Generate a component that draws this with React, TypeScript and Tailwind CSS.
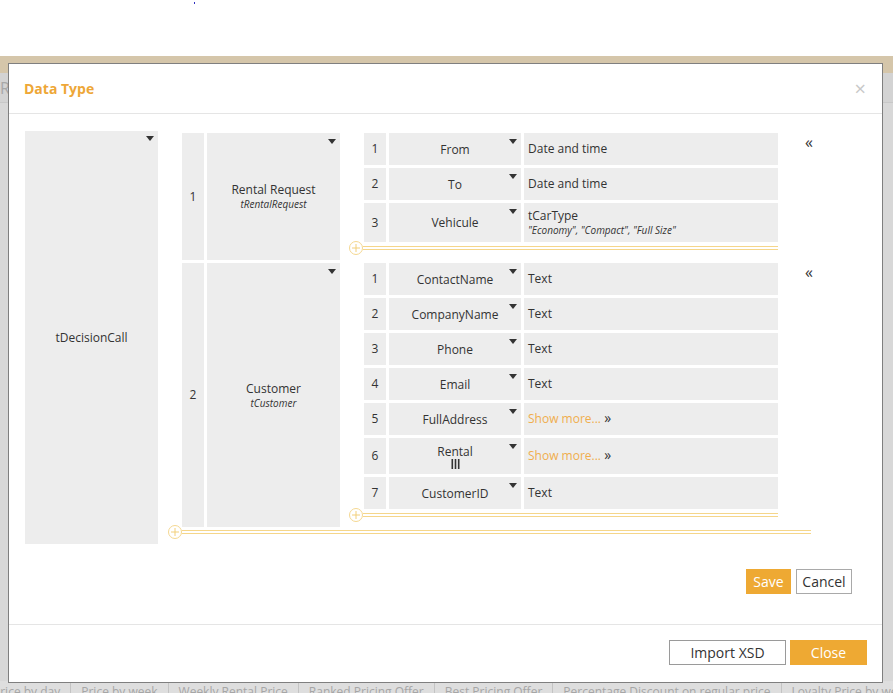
import React from "react";

type Field = {
  name: string;
  type?: string;
  sub?: string;
  more?: boolean;
  list?: boolean;
};

const requestFields: Field[] = [
  { name: "From", type: "Date and time" },
  { name: "To", type: "Date and time" },
  { name: "Vehicule", type: "tCarType", sub: '"Economy", "Compact", "Full Size"' },
];

const customerFields: Field[] = [
  { name: "ContactName", type: "Text" },
  { name: "CompanyName", type: "Text" },
  { name: "Phone", type: "Text" },
  { name: "Email", type: "Text" },
  { name: "FullAddress", more: true },
  { name: "Rental", more: true, list: true },
  { name: "CustomerID", type: "Text" },
];

const tabs = [
  "Price by day",
  "Price by week",
  "Weekly Rental Price",
  "Ranked Pricing Offer",
  "Best Pricing Offer",
  "Percentage Discount on regular price",
  "Loyalty Price by week",
];

const Caret = () => (
  <svg width="8" height="5" viewBox="0 0 8 5" className="absolute right-[4px] top-[6px]">
    <path d="M0 0 L8 0 L4 5 Z" fill="#333" />
  </svg>
);

const ListIcon = () => (
  <svg width="9" height="10" viewBox="0 0 9 10" className="mx-auto block">
    <rect x="0.5" y="0" width="1.6" height="10" fill="#333" />
    <rect x="3.7" y="0" width="1.6" height="10" fill="#333" />
    <rect x="6.9" y="0" width="1.6" height="10" fill="#333" />
  </svg>
);

const AddLine = ({ offset }: { offset: "inner" | "outer" }) => (
  <div
    className={
      offset === "inner"
        ? "flex h-[14px] items-center -mt-[1px] -ml-[15px]"
        : "flex h-[14px] items-center -mt-[2px] -ml-[14px]"
    }
  >
    <div className="flex h-[14px] w-[14px] shrink-0 items-center justify-center rounded-full border border-[#f5d891] bg-white">
      <svg width="8" height="8" viewBox="0 0 8 8">
        <path d="M4 0 V8 M0 4 H8" stroke="#f2cf7a" strokeWidth="1" />
      </svg>
    </div>
    <div className="h-[4px] flex-1 border-y border-[#f5d68a]" />
  </div>
);

const FieldRow = ({ f, i }: { f: Field; i: number }) => (
  <div className={f.sub ? "flex h-[39px] gap-[3px]" : f.list ? "flex h-[36px] gap-[3px]" : "flex h-[32px] gap-[3px]"}>
    <div className="flex w-[22px] items-center justify-center bg-[#ededed]">{i + 1}</div>
    <div className="relative flex w-[132px] flex-col items-center justify-center bg-[#ededed] leading-[15px]">
      <span>{f.name}</span>
      {f.list && <ListIcon />}
      <Caret />
    </div>
    <div className="flex flex-1 flex-col justify-center bg-[#ededed] pl-[4px]">
      {f.more ? (
        <span className="text-[#f0ad4e]">
          Show more... <span className="text-[14px] leading-none text-[#333]">»</span>
        </span>
      ) : (
        <>
          <span className="leading-[14px]">{f.type}</span>
          {f.sub && <span className="text-[10px] italic leading-[14px]">{f.sub}</span>}
        </>
      )}
    </div>
  </div>
);

const Group = ({
  n,
  name,
  type,
  fields,
}: {
  n: number;
  name: string;
  type: string;
  fields: Field[];
}) => (
  <div className="flex">
    <div className="flex w-[22px] items-center justify-center bg-[#ededed]">{n}</div>
    <div className="relative ml-[3px] flex w-[133px] flex-col items-center justify-center bg-[#ededed]">
      <span className="leading-[15px]">{name}</span>
      <span className="text-[10px] italic leading-[14px]">{type}</span>
      <Caret />
    </div>
    <div className="ml-[24px] flex w-[414px] flex-col pb-[5px]">
      <div className="flex flex-col gap-[3px]">
        {fields.map((f, i) => (
          <FieldRow key={f.name} f={f} i={i} />
        ))}
      </div>
      <AddLine offset="inner" />
    </div>
    <div className="w-[33px] whitespace-nowrap pl-[27px] pt-[1px] text-[16px] leading-[16px]">«</div>
  </div>
);

export default function App() {
  return (
    <div className="relative h-[693px] w-[893px] overflow-hidden bg-white font-['Open_Sans',sans-serif] text-[12px] text-[#333]">
      {/* page behind the dialog */}
      <div className="h-[56px] bg-white pl-[194px] pt-[2px]">
        <div className="h-[2px] w-[1px] bg-[#3030c0]" />
      </div>
      <div className="h-[17px] bg-[#d5c6aa]" />
      <div className="h-[30px] border-b border-[#c8c8c8] bg-[#d3d3d3] text-[16px] leading-[30px] text-[#a8a8a8]">R</div>
      <div className="h-[578px] bg-[#d8d8d8]" />
      <div className="-ml-[17px] flex h-[30px] items-start bg-[#dedede] pt-[2px] text-[12px] leading-[18px] text-[#a6a6a6]">
        {tabs.map((t) => (
          <div key={t} className="whitespace-nowrap border-r border-[#c4c4c4] px-[10px]">
            {t}
          </div>
        ))}
      </div>

      {/* dialog */}
      <div className="absolute left-[8px] top-[63px] flex h-[620px] w-[875px] flex-col border border-[#7f7f7f] bg-white">
        <div className="flex h-[50px] items-center justify-between border-b border-[#e5e5e5] pl-[15px] pr-[16px]">
          <span className="text-[14px] font-bold text-[#eea737]">Data Type</span>
          <span className="text-[20px] leading-none text-[#c8c8c8]">×</span>
        </div>

        <div className="flex flex-col pb-[30px] pl-[16px] pr-[30px] pt-[17px]">
          <div className="flex h-[413px]">
            <div className="relative flex w-[133px] items-center justify-center bg-[#ededed]">
              tDecisionCall
              <svg width="8" height="5" viewBox="0 0 8 5" className="absolute right-[4px] top-[5px]">
                <path d="M0 0 L8 0 L4 5 Z" fill="#333" />
              </svg>
            </div>
            <div className="ml-[24px] mt-[2px] flex w-[629px] flex-col">
              <div className="flex flex-col gap-[3px]">
                <Group n={1} name="Rental Request" type="tRentalRequest" fields={requestFields} />
                <Group n={2} name="Customer" type="tCustomer" fields={customerFields} />
              </div>
              <AddLine offset="outer" />
            </div>
          </div>
          <div className="mt-[25px] flex justify-end gap-[5px] text-[14px]">
            <button className="h-[25px] w-[45px] bg-[#eea933] text-white">Save</button>
            <button className="h-[25px] w-[56px] border border-[#a9a9a9] bg-white text-[#333]">Cancel</button>
          </div>
        </div>

        <div className="flex flex-1 items-start justify-end gap-[4px] border-t border-[#e5e5e5] pr-[15px] pt-[15px] text-[14px]">
          <button className="h-[25px] w-[117px] border border-[#9a9a9a] bg-white text-[#333]">Import XSD</button>
          <button className="h-[25px] w-[77px] bg-[#eea933] text-white">Close</button>
        </div>
      </div>
    </div>
  );
}
